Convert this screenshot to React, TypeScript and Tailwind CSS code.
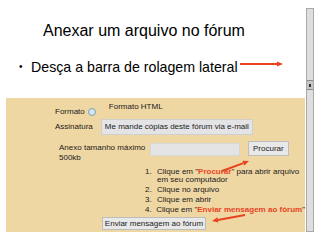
import React from "react";

const RED = "#e8431f";

function Arrow({ x1, y1, x2, y2 }: { x1: number; y1: number; x2: number; y2: number }) {
  const a = Math.atan2(y2 - y1, x2 - x1);
  const l = 6;
  const w = 2.6;
  const bx = x2 - l * Math.cos(a);
  const by = y2 - l * Math.sin(a);
  const p1 = `${bx + w * Math.sin(a)},${by - w * Math.cos(a)}`;
  const p2 = `${bx - w * Math.sin(a)},${by + w * Math.cos(a)}`;
  return (
    <g>
      <line x1={x1} y1={y1} x2={bx} y2={by} stroke={RED} strokeWidth={2} />
      <polygon points={`${x2},${y2} ${p1} ${p2}`} fill={RED} />
    </g>
  );
}

export default function App() {
  return (
    <div
      className="relative flex h-[240px] w-[320px] overflow-hidden bg-white text-black"
      style={{ fontFamily: '"Liberation Sans", Arial, sans-serif' }}
    >
      <div className="flex w-[306px] flex-col">
        <h1 className="pl-[43px] pt-[21px] text-[16px] leading-[20px]">Anexar um arquivo no fórum</h1>
        <div className="flex items-center pl-[19px] pt-[17px] text-[14.2px] leading-[18px]">
          <span className="w-[12px] text-[10px]">•</span>
          <span>Desça a barra de rolagem lateral</span>
        </div>

        <section className="ml-[6px] mt-[22px] h-[134px] w-[299px] whitespace-nowrap bg-[#efd7a4] text-[8px] leading-[10px] text-[#1a1a1a]">
          <div className="flex items-start pl-[49px] pt-[4px]">
            <span className="mt-[5px]">Formato</span>
            <span className="ml-[3px] mt-[6px] h-[8px] w-[8px] rounded-full border border-[#8aa0ae] bg-[#cfe5ef]" />
            <span className="ml-[13px]">Formato HTML</span>
          </div>
          <div className="flex items-center pl-[49px] pt-[2px]">
            <span>Assinatura</span>
            <span className="ml-[8px] flex h-[16px] items-center border border-[#cfcfcf] bg-[#e4e4e7] px-[3px]">
              Me mande cópias deste fórum via e-mail
            </span>
          </div>
          <div className="flex items-start pl-[53px] pt-[6px]">
            <div className="mt-[2px] w-[91px] leading-[10px]">
              Anexo tamanho máximo
              <br />
              500kb
            </div>
            <span className="mt-[2px] h-[13px] w-[90px] border border-[#d6d6d6] bg-[#e4e4e4]" />
            <span className="ml-[8px] flex h-[15px] items-center border border-[#bdbdbd] bg-[#e8e8e8] px-[4px]">
              Procurar
            </span>
          </div>
          <ol className="ml-[139px] mt-[5px] flex flex-col gap-[2px] leading-[8px]">
            <li className="flex">
              <span className="w-[12px]">1.</span>
              <span>
                Clique em "<b className="font-bold text-[#e8431f]">Procurar</b>" para abrir arquivo
                <br />
                em seu computador
              </span>
            </li>
            <li className="flex">
              <span className="w-[12px]">2.</span>
              <span>Clique no arquivo</span>
            </li>
            <li className="flex">
              <span className="w-[12px]">3.</span>
              <span>Clique em abrir</span>
            </li>
            <li className="flex">
              <span className="w-[12px]">4.</span>
              <span>
                Clique em "<b className="font-bold text-[#e8431f]">Enviar mensagem ao fórum</b>"
              </span>
            </li>
          </ol>
          <div className="ml-[96px] mt-[3px] flex h-[13px] w-[104px] items-center justify-center border border-[#bdbdbd] bg-[#e8e8e8]">
            Enviar mensagem ao fórum
          </div>
        </section>
      </div>

      <div className="mt-[8px] flex h-[224px] w-[8px] flex-col border border-[#a9a9a9] bg-[#dedede]">
        <div className="mt-[71px] flex h-[10px] items-center justify-center border-y border-[#8c8c8c] bg-[#c6c6c6]">
          <span className="h-[3px] w-[2px] bg-[#333]" />
        </div>
      </div>

      <svg className="pointer-events-none absolute left-0 top-0" width={320} height={240}>
        <Arrow x1={240} y1={64} x2={283} y2={64} />
        <Arrow x1={222} y1={171} x2={249} y2={161} />
        <Arrow x1={245} y1={215} x2={212} y2={221} />
      </svg>
    </div>
  );
}
